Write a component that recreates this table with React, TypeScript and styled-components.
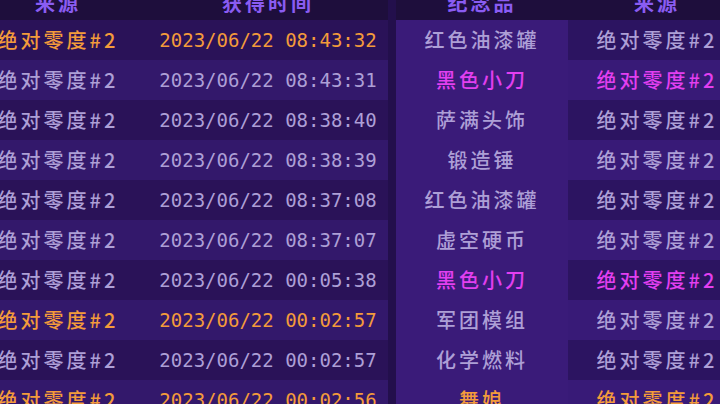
import styled, { createGlobalStyle } from 'styled-components';

type Tone = 'plain' | 'gold' | 'pink';

interface Record {
  source: string;
  time: string;
  sourceTone: Tone;
  item: string;
  owner: string;
  itemTone: Tone;
}

const records: Record[] = [
  { source: '绝对零度#2', time: '2023/06/22 08:43:32', sourceTone: 'gold', item: '红色油漆罐', owner: '绝对零度#2', itemTone: 'plain' },
  { source: '绝对零度#2', time: '2023/06/22 08:43:31', sourceTone: 'plain', item: '黑色小刀', owner: '绝对零度#2', itemTone: 'pink' },
  { source: '绝对零度#2', time: '2023/06/22 08:38:40', sourceTone: 'plain', item: '萨满头饰', owner: '绝对零度#2', itemTone: 'plain' },
  { source: '绝对零度#2', time: '2023/06/22 08:38:39', sourceTone: 'plain', item: '锻造锤', owner: '绝对零度#2', itemTone: 'plain' },
  { source: '绝对零度#2', time: '2023/06/22 08:37:08', sourceTone: 'plain', item: '红色油漆罐', owner: '绝对零度#2', itemTone: 'plain' },
  { source: '绝对零度#2', time: '2023/06/22 08:37:07', sourceTone: 'plain', item: '虚空硬币', owner: '绝对零度#2', itemTone: 'plain' },
  { source: '绝对零度#2', time: '2023/06/22 00:05:38', sourceTone: 'plain', item: '黑色小刀', owner: '绝对零度#2', itemTone: 'pink' },
  { source: '绝对零度#2', time: '2023/06/22 00:02:57', sourceTone: 'gold', item: '军团模组', owner: '绝对零度#2', itemTone: 'plain' },
  { source: '绝对零度#2', time: '2023/06/22 00:02:57', sourceTone: 'plain', item: '化学燃料', owner: '绝对零度#2', itemTone: 'plain' },
  { source: '绝对零度#2', time: '2023/06/22 00:02:56', sourceTone: 'gold', item: '舞娘', owner: '绝对零度#2', itemTone: 'gold' },
];

const toneColor: { [k in Tone]: string } = {
  plain: '#ad9fd6',
  gold: '#f39b3b',
  pink: '#e23ff0',
};

const GlobalStyle = createGlobalStyle`
  html, body {
    margin: 0;
    padding: 0;
    background: #1e0e3c;
    overflow: hidden;
  }
`;

// the list is scrolled a little: header and first column run past the top/left edge
const Board = styled.div`
  display: flex;
  margin: -15px 0 0 -32px;
  width: 778px;
`;

const Panel = styled.div<{ $width: number }>`
  display: flex;
  flex-direction: column;
  width: ${({ $width }) => $width}px;
  flex-shrink: 0;
`;

const Divider = styled.div`
  width: 8px;
  flex-shrink: 0;
  background: #230f4c;
`;

const HeadRow = styled.div<{ $cols: string }>`
  display: grid;
  grid-template-columns: ${({ $cols }) => $cols};
  height: 35px;
  background: #1e0e3c;
`;

const HeadCell = styled.div`
  display: flex;
  align-items: center;
  justify-content: center;
  font-family: 'Noto Sans CJK SC', sans-serif;
  font-size: 20px;
  font-weight: 700;
  letter-spacing: 3px;
  color: #8a5cf2;
`;

const Row = styled.div<{ $cols: string; $bg?: string }>`
  display: grid;
  grid-template-columns: ${({ $cols }) => $cols};
  height: 40px;
  background: ${({ $bg }) => $bg || 'transparent'};
`;

const Cell = styled.div<{ $tone: Tone; $bg?: string }>`
  display: flex;
  align-items: center;
  justify-content: center;
  padding-bottom: 1px;
  font-family: 'Noto Sans CJK SC', sans-serif;
  font-size: 20px;
  font-weight: 500;
  letter-spacing: 3px;
  color: ${({ $tone }) => toneColor[$tone]};
  background: ${({ $bg }) => $bg || 'transparent'};
  white-space: nowrap;
`;

const TimeCell = styled(Cell)`
  font-family: 'DejaVu Sans Mono', 'Liberation Mono', monospace;
  font-size: 19px;
  font-weight: 400;
  letter-spacing: 0;
`;

const leftCols = '180px 240px';
const rightCols = '172px 178px';

const leftBg = (i: number) => (i % 2 === 0 ? '#2a1258' : '#33186b');
const ownerBg = (i: number) => (i % 2 === 0 ? '#2c1461' : '#381a77');

export default function App() {
  return (
    <>
      <GlobalStyle />
      <Board>
        <Panel $width={420}>
          <HeadRow $cols={leftCols}>
            <HeadCell>来源</HeadCell>
            <HeadCell>获得时间</HeadCell>
          </HeadRow>
          {records.map((r, i) => (
            <Row key={i} $cols={leftCols} $bg={leftBg(i)}>
              <Cell $tone={r.sourceTone}>{r.source}</Cell>
              <TimeCell $tone={r.sourceTone}>{r.time}</TimeCell>
            </Row>
          ))}
        </Panel>
        <Divider />
        <Panel $width={350}>
          <HeadRow $cols={rightCols}>
            <HeadCell>纪念品</HeadCell>
            <HeadCell>来源</HeadCell>
          </HeadRow>
          {records.map((r, i) => (
            <Row key={i} $cols={rightCols}>
              <Cell $tone={r.itemTone} $bg="#3a1b79">{r.item}</Cell>
              <Cell $tone={r.itemTone} $bg={ownerBg(i)}>{r.owner}</Cell>
            </Row>
          ))}
        </Panel>
      </Board>
    </>
  );
}
